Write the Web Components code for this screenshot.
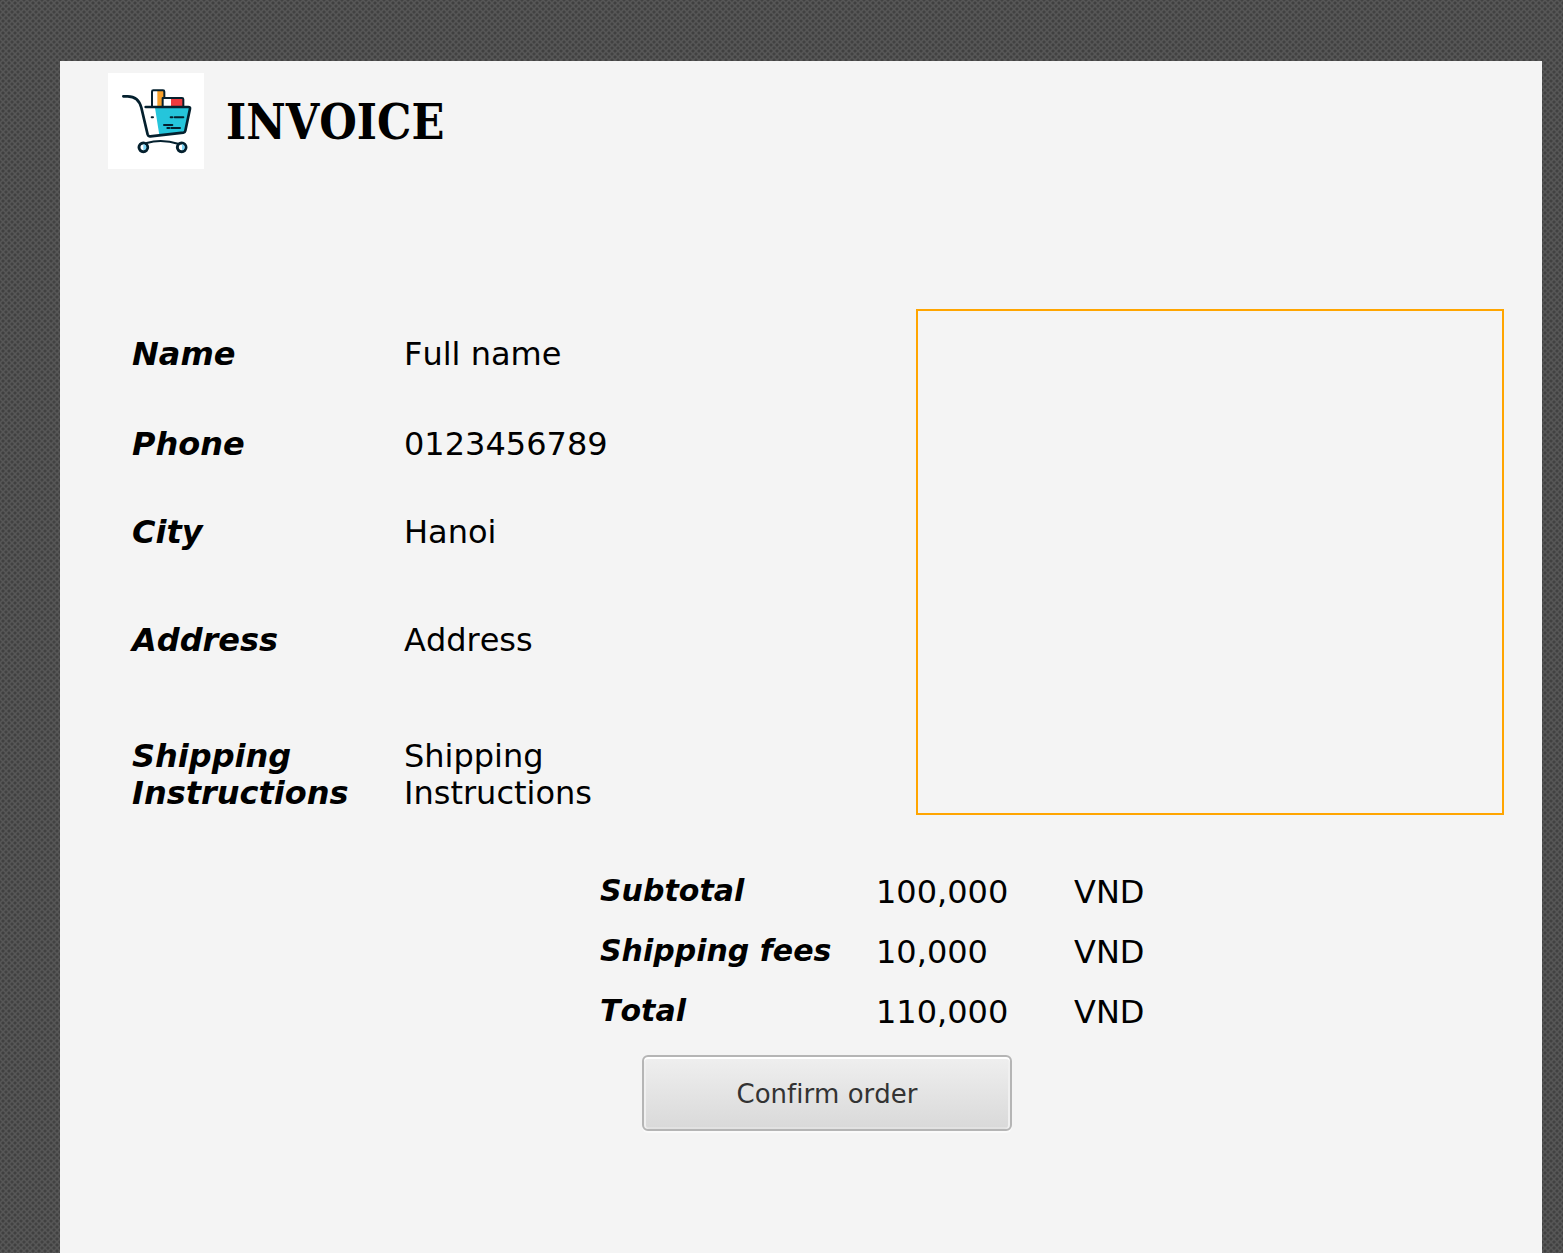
<!DOCTYPE html>
<html lang="en">
<head>
<meta charset="utf-8">
<title>Invoice</title>
<style>
html { height: 100%; }
body { margin: 0; min-height: 100%; display: flex; font: 32px/37px "DejaVu Sans", sans-serif; font-kerning: none; font-variant-ligatures: none; color: #000; background: #4b4b4b; }
</style>
</head>
<body>
<invoice-page>
  <invoice-header slot="header">INVOICE</invoice-header>
  <delivery-details></delivery-details>
  <order-totals></order-totals>
  <confirm-button>Confirm order</confirm-button>
</invoice-page>
<script>
function define(name, html) {
  customElements.define(name, class extends HTMLElement {
    constructor() {
      super();
      this.attachShadow({ mode: "open" }).innerHTML = html;
    }
  });
}

define("invoice-page", `
<style>
:host {
  display: flex; flex: 1; box-sizing: border-box; min-height: 100vh; padding: 61px 21px 0 60px;
  background:
    radial-gradient(circle, #404040 0 1px, transparent 2px) 0 0 / 6px 6px,
    radial-gradient(circle, #424242 0 1px, transparent 2px) 3px 3px / 6px 6px,
    #575757;
}
main { flex: 1; background: #f4f4f4; display: flex; flex-direction: column; }
</style>
<main><slot name="header"></slot><slot></slot></main>`);

define("invoice-header", `
<style>
:host { display: block; padding: 12px 48px 0; }
header { display: flex; align-items: center; gap: 22px; }
svg { width: 96px; height: 96px; background: #fff; }
h1 { margin: 0; padding-top: 2px; font: bold 48px/56px "DejaVu Serif Condensed", "DejaVu Serif", serif; font-kerning: none; }
</style>
<header>
  <svg viewBox="12 9 288 288" aria-hidden="true" fill="none" stroke="#04202e" stroke-width="8" stroke-linecap="round" stroke-linejoin="round">
    <path d="M144 110V65q0-4 4-4h15v49z" fill="#fff" stroke="none"/>
    <path d="M160 61h18q3 0 3 4v45h-21z" fill="#f8a12b" stroke="none"/>
    <path d="M144 110V65q0-4 4-4h29q4 0 4 4v19" stroke-width="6"/>
    <path d="M176 84h26v26h-26z" fill="#fff" stroke="none"/>
    <path d="M201 84h37v26h-37z" fill="#ef3a3e" stroke="none"/>
    <path d="M176 110V84h58q4 0 4 4v22" stroke-width="6"/>
    <path d="M153 113h104l-14 73-77 10z" fill="#25c5db" stroke="none"/>
    <path d="M58 79h13c23 0 36 15 41 34l19 81q2 6 8 5l99-11q5-1 6-6l14-66q1-5-5-5H125"/>
    <path d="M143 142h4M200 142h5M212 142h26M180 165h25M190 174h6M202 174h26" stroke-width="6"/>
    <path d="M128 219q45-13 97 3" stroke-width="6"/>
    <circle cx="118" cy="232" r="13" fill="#fff" stroke-width="9"/>
    <circle cx="233" cy="232" r="13" fill="#fff" stroke-width="9"/>
    <path d="M118 223q9 1 9 9t-9 9zM234 223q8 1 8 9t-8 9z" fill="#7ed6f7" stroke="none"/>
  </svg>
  <h1><slot></slot></h1>
</header>`);

define("delivery-details", `
<style>
:host { display: flex; justify-content: space-between; gap: 24px; padding: 140px 38px 0 72px; }
dl {
  margin: 0; padding-top: 27px; display: grid;
  grid-template-columns: 272px minmax(0, 240px);
  grid-template-rows: 90px 88px 108px 116px auto;
}
dt { font-weight: bold; font-style: italic; }
dd { margin: 0; }
.items { box-sizing: border-box; flex: 0 1 588px; min-height: 506px; border: 2px solid #ffa500; }
</style>
<dl>
  <dt>Name</dt><dd>Full name</dd>
  <dt>Phone</dt><dd>0123456789</dd>
  <dt>City</dt><dd>Hanoi</dd>
  <dt>Address</dt><dd>Address</dd>
  <dt>Shipping<br>Instructions</dt><dd>Shipping<br>Instructions</dd>
</dl>
<section class="items" aria-label="Items"></section>`);

define("order-totals", `
<style>
:host { display: block; padding: 58px 0 0 540px; }
table { border-collapse: collapse; }
th, td { box-sizing: border-box; padding: 0; height: 60px; vertical-align: top; text-align: left; font-weight: normal; }
th { width: 276px; font: italic bold 30px/35px "DejaVu Sans", sans-serif; font-kerning: none; }
td { line-height: 39px; }
.amount { width: 198px; }
</style>
<table>
  <tr><th scope="row">Subtotal</th><td class="amount">100,000</td><td>VND</td></tr>
  <tr><th scope="row">Shipping fees</th><td class="amount">10,000</td><td>VND</td></tr>
  <tr><th scope="row">Total</th><td class="amount">110,000</td><td>VND</td></tr>
</table>`);

define("confirm-button", `
<style>
:host { display: block; padding: 2px 0 48px 582px; }
button {
  display: block; width: 370px; height: 76px; padding: 2px 0 0; color: #333;
  font: 26px/30px "DejaVu Sans", sans-serif; font-kerning: none; font-variant-ligatures: none;
  border: 2px solid #b5b5b5; border-radius: 6px;
  background: linear-gradient(#efefef, #d9d9d9) padding-box;
  box-shadow: inset 0 2px #fff, inset 2px 0 #f0f0f0, inset -2px 0 #f0f0f0, inset 0 -2px #e2e2e2, 0 2px #fafafa;
}
</style>
<button type="button"><slot></slot></button>`);
</script>
</body>
</html>
